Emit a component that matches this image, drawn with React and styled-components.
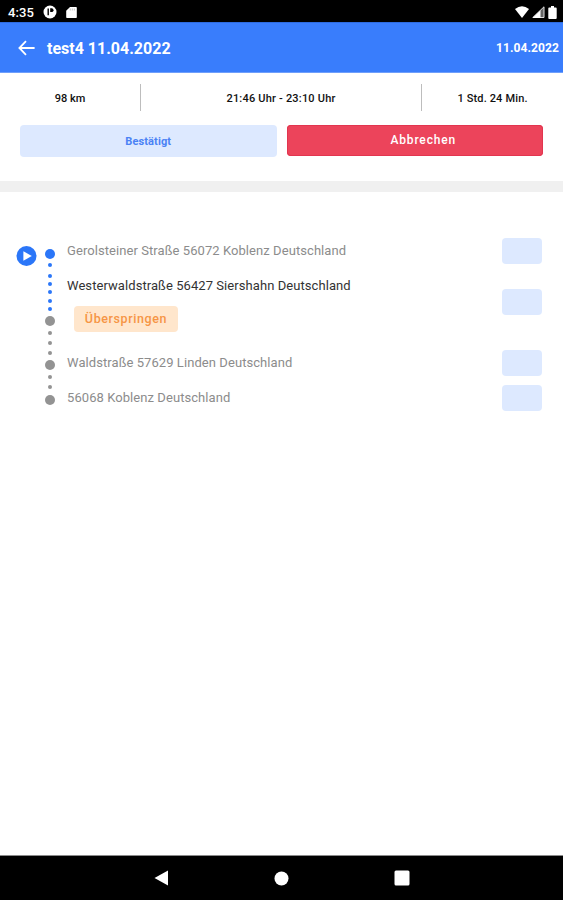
import styled, { createGlobalStyle } from "styled-components"

const GlobalStyle = createGlobalStyle`
  * {
    box-sizing: border-box;
  }

  body {
    margin: 0;
    background: #ffffff;
    font-family: Roboto, "Liberation Sans", sans-serif;
  }
`

const Screen = styled.div`
  height: 100vh;
  display: flex;
  flex-direction: column;
  overflow: hidden;
`

const StatusBar = styled.div`
  height: 22px;
  flex: none;
  padding: 2px 6px 0 8px;
  background: #000000;
  color: #ffffff;
  display: flex;
  align-items: center;
  justify-content: space-between;
`

const StatusGroup = styled.div`
  display: flex;
  align-items: center;
  gap: ${(props) => props.$gap}px;
`

const Clock = styled.span`
  font-size: 13px;
  font-weight: 500;
  letter-spacing: 0.1px;
`

const Header = styled.header`
  height: 51px;
  flex: none;
  padding: 0 4px 0 18px;
  background: #397dfc;
  border-top: 1px solid #2d6be0;
  border-bottom: 1px solid #6f9ffb;
  color: #ffffff;
  display: flex;
  align-items: center;
`

const Title = styled.h1`
  flex: 1;
  margin: 0 0 0 12px;
  padding-top: 1px;
  font-size: 16px;
  font-weight: 700;
`

const HeaderDate = styled.span`
  font-size: 12px;
  font-weight: 700;
  letter-spacing: 0.1px;
`

const Summary = styled.section`
  height: 108px;
  flex: none;
  padding-top: 11px;
`

const Stats = styled.div`
  height: 27px;
  display: grid;
  grid-template-columns: 140px 281px 1fr;
`

const Stat = styled.div`
  display: flex;
  align-items: center;
  justify-content: center;
  padding-top: 2px;
  font-size: 11px;
  font-weight: 500;
  letter-spacing: ${(props) => props.$spacing || 0}px;
  color: #111111;

  & + & {
    border-left: 1px solid #bdbdbd;
  }
`

const Actions = styled.div`
  display: flex;
  gap: 10px;
  padding: 14px 20px 0;
`

const Button = styled.button`
  flex: 1 1 0;
  height: 32px;
  padding: 0;
  border: none;
  border-radius: 4px;
  background: #dde9ff;
  color: #4a82f5;
  font-family: inherit;
  font-size: 11px;
  font-weight: 700;
  letter-spacing: 0.1px;
`

const CancelButton = styled(Button)`
  height: 31px;
  padding-bottom: 1px;
  background: #ec445b;
  box-shadow: inset 0 0 0 1px #e2354f;
  color: #ffffff;
  font-size: 12px;
  font-weight: 500;
  letter-spacing: 0.85px;
  text-indent: 17px;
`

const Separator = styled.div`
  height: 11px;
  flex: none;
  background: #f0f0f0;
`

const Route = styled.main`
  flex: 1;
  display: flex;
  padding: 42px 21px 0 16px;
`

const PlayIcon = styled.svg`
  flex: none;
  margin-top: 12px;
`

const Rail = styled.div`
  width: 10px;
  margin: 15px 12px 0 8px;
  display: flex;
  flex-direction: column;
  align-items: center;
`

const Dot = styled.span`
  flex: none;
  width: ${(props) => (props.$large ? 10 : 4)}px;
  height: ${(props) => (props.$large ? 10 : 4)}px;
  margin-top: ${(props) => props.$gap}px;
  border-radius: 50%;
  background: ${(props) => (props.$active ? "#2b76f8" : "#939393")};
`

const Stops = styled.div`
  flex: 1;
`

const Stop = styled.div`
  height: ${(props) => (props.$current ? 67 : 34.5)}px;
  margin-bottom: ${(props) => (props.$current ? 10.5 : 0)}px;
  display: flex;
  align-items: center;
  justify-content: space-between;
`

const StopInfo = styled.div`
  align-self: ${(props) => (props.$current ? "flex-start" : "center")};
  padding-top: ${(props) => (props.$current ? 8 : 0.4)}px;
`

const Address = styled.div`
  font-size: 13px;
  line-height: 18px;
  letter-spacing: 0.07px;
  white-space: nowrap;
  color: ${(props) => (props.$current ? "#333333" : "#8c8c8c")};
`

const SkipButton = styled.button`
  display: block;
  width: 104px;
  height: 26px;
  margin: 11px 0 0 7px;
  padding: 0 0 1px;
  border: none;
  border-radius: 4px;
  background: #ffe6cc;
  color: #f69545;
  font-family: inherit;
  font-size: 12.5px;
  font-weight: 500;
  letter-spacing: 0.6px;
`

const TimeBox = styled.div`
  width: 40px;
  height: 26px;
  border-radius: 4px;
  background: #dde9ff;
`

const NavBar = styled.nav`
  height: 45px;
  flex: none;
  border-top: 1px solid #8a8a8a;
  background: #000000;
  display: flex;
  align-items: center;
  justify-content: center;
  gap: 105px;
`

const stops = [
  { address: "Gerolsteiner Straße 56072 Koblenz Deutschland" },
  { address: "Westerwaldstraße 56427 Siershahn Deutschland", current: true },
  { address: "Waldstraße 57629 Linden Deutschland" },
  { address: "56068 Koblenz Deutschland" },
]

const dots = [
  { large: true, active: true, gap: 0 },
  { active: true, gap: 4 },
  { active: true, gap: 7 },
  { active: true, gap: 4 },
  { active: true, gap: 4 },
  { active: true, gap: 5 },
  { active: true, gap: 4 },
  { large: true, gap: 5 },
  { gap: 5 },
  { gap: 6 },
  { gap: 6 },
  { large: true, gap: 5 },
  { gap: 5 },
  { gap: 6 },
  { large: true, gap: 6 },
]

const App = () => {
  return (
    <Screen>
      <GlobalStyle />
      <StatusBar>
        <StatusGroup $gap={9}>
          <Clock>4:35</Clock>
          <svg width="14" height="14" viewBox="0 0 14 14">
            <circle cx="7" cy="7" r="6.5" fill="#fff" />
            <path d="M5.2 3.6V10.2" fill="none" stroke="#000" strokeWidth="1.4" />
            <path d="M7.2 3.3h1.4a1.9 1.9 0 0 1 0 3.8H7.2z" fill="#000" />
          </svg>
          <svg width="11" height="13" viewBox="0 0 11 13">
            <path d="M4 1h6a.8.8 0 0 1 .8.8v9.4a.8.8 0 0 1-.8.8H1a.8.8 0 0 1-.8-.8V4.8z" fill="#fff" />
            <path d="M4.3 2.5v2M6.3 2.5v2M8.3 2.5v2" stroke="#aaa" strokeWidth=".7" />
          </svg>
        </StatusGroup>
        <StatusGroup $gap={3}>
          <svg width="14" height="12" viewBox="0 0 14 12">
            <path d="M0 3Q7-2.4 14 3L7 12z" fill="#fff" />
          </svg>
          <svg width="13" height="12" viewBox="0 0 13 12">
            <path d="M.8 11.5L12 .8V11.5z" fill="#666" stroke="#ddd" />
            <path d="M.5 12L8.5 4.2V12z" fill="#fff" />
          </svg>
          <svg width="9" height="13" viewBox="0 0 9 13">
            <path d="M3 0h3v1.5h1.8q.9 0 .9.9v9.7q0 .9-.9.9H1.2q-.9 0-.9-.9V2.4q0-.9.9-.9H3z" fill="#fff" />
          </svg>
        </StatusGroup>
      </StatusBar>

      <Header>
        <svg width="17" height="16" viewBox="0 0 17 16">
          <path d="M8 1.2L1.4 8L8 14.8M1.6 8H16.6" fill="none" stroke="#fff" strokeWidth="1.8" />
        </svg>
        <Title>test4 11.04.2022</Title>
        <HeaderDate>11.04.2022</HeaderDate>
      </Header>

      <Summary>
        <Stats>
          <Stat>98 km</Stat>
          <Stat $spacing={0.2}>21:46 Uhr - 23:10 Uhr</Stat>
          <Stat $spacing={0.15}>1 Std. 24 Min.</Stat>
        </Stats>
        <Actions>
          <Button>Bestätigt</Button>
          <CancelButton>Abbrechen</CancelButton>
        </Actions>
      </Summary>
      <Separator />

      <Route>
        <PlayIcon width="21" height="21" viewBox="0 0 21 21">
          <circle cx="10.5" cy="10" r="10" fill="#2b76f8" />
          <path d="M7.4 5.2L15.8 10L7.4 14.8z" fill="#fff" />
        </PlayIcon>
        <Rail>
          {dots.map((dot, i) => (
            <Dot key={i} $large={dot.large} $active={dot.active} $gap={dot.gap} />
          ))}
        </Rail>
        <Stops>
          {stops.map((stop) => (
            <Stop key={stop.address} $current={stop.current}>
              <StopInfo $current={stop.current}>
                <Address $current={stop.current}>{stop.address}</Address>
                {stop.current && <SkipButton>Überspringen</SkipButton>}
              </StopInfo>
              <TimeBox />
            </Stop>
          ))}
        </Stops>
      </Route>

      <NavBar>
        <svg width="15" height="16" viewBox="0 0 15 16">
          <path d="M.5 8L14 .4V15.6z" fill="#fff" />
        </svg>
        <svg width="15" height="15" viewBox="0 0 15 15">
          <circle cx="7.5" cy="7.5" r="7" fill="#fff" />
        </svg>
        <svg width="16" height="16" viewBox="0 0 16 16">
          <rect x=".5" y=".5" width="15" height="15" rx="1.5" fill="#fff" />
        </svg>
      </NavBar>
    </Screen>
  )
}

export default App
